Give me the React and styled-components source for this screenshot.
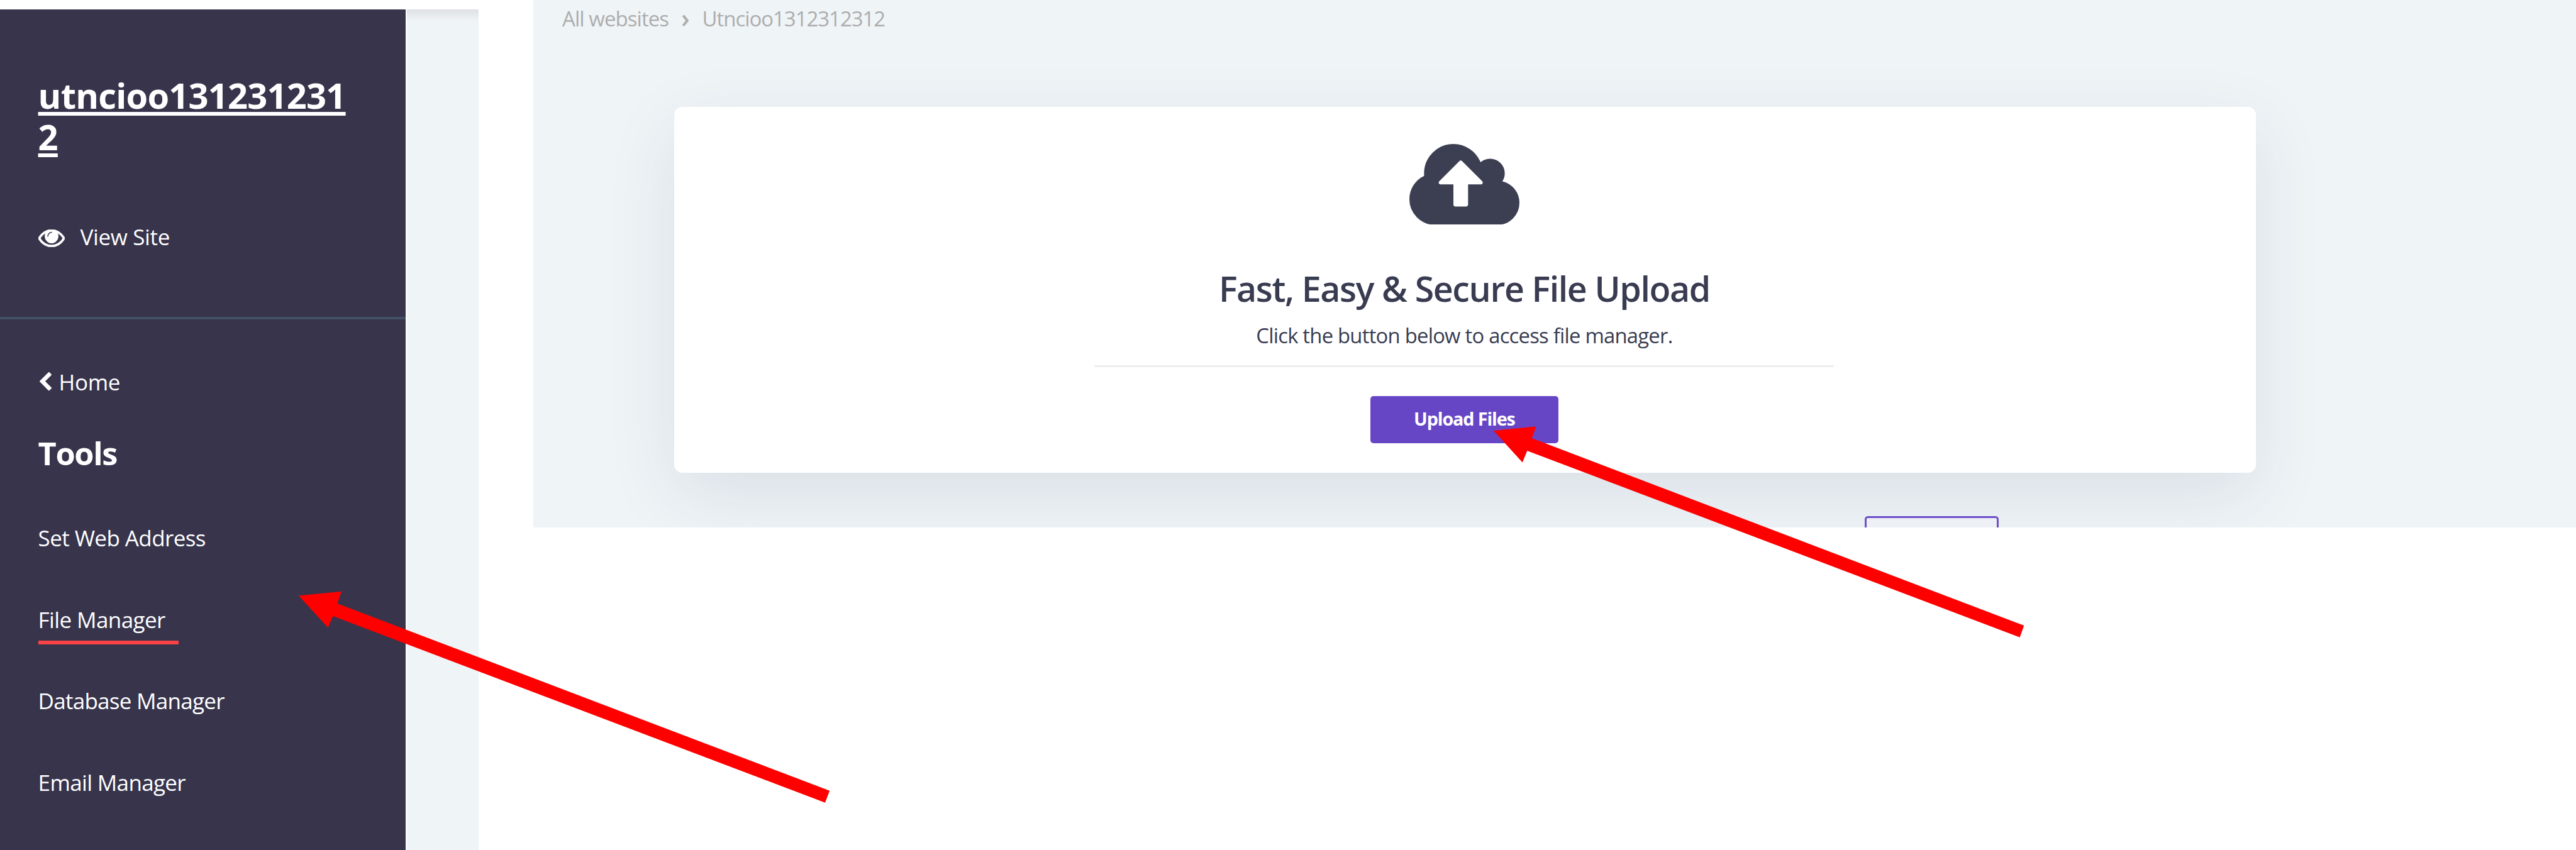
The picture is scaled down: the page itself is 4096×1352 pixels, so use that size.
import React from "react";
import styled, { createGlobalStyle } from "styled-components";

const GlobalStyle = createGlobalStyle`
  * { box-sizing: border-box; }
  html, body { margin: 0; padding: 0; background: #fff; }
  body { font-family: "Open Sans", "Noto Sans", sans-serif; overflow: hidden; }
`;

const Page = styled.div`
  position: relative;
  display: flex;
  align-items: flex-start;
  width: 4096px;
  height: 1352px;
  background: #fff;
  overflow: hidden;
`;

const Sidebar = styled.aside`
  display: flex;
  flex-direction: column;
  flex: none;
  width: 645px;
  height: 1337px;
  margin-top: 15px;
  padding-top: 102.6px;
  background: #37344c;
  color: #fff;
`;

const SiteName = styled.a`
  width: 500px;
  margin-left: 60.6px;
  font-size: 56px;
  font-weight: 700;
  line-height: 66px;
  letter-spacing: -0.77px;
  word-break: break-all;
  text-decoration: underline;
  text-decoration-thickness: 6px;
  text-underline-offset: 4.7px;
  text-decoration-skip-ink: none;
`;

const SideLink = styled.a`
  display: flex;
  align-items: center;
  gap: ${(p) => p.$gap}px;
  height: 48px;
  margin-top: ${(p) => p.$top}px;
  padding-left: ${(p) => p.$left}px;
  font-size: 35px;
  line-height: 48px;
  letter-spacing: -0.35px;
`;

const EyeIcon = styled.svg`
  width: 42px;
  height: 28px;
  margin-top: 4px;
  fill: #fff;
  stroke: #fff;
  stroke-width: 36px;
`;

const BackIcon = styled.svg`
  width: 19px;
  height: 29.5px;
  margin-top: -2px;
  fill: #fff;
`;

const Divider = styled.div`
  flex: none;
  height: 4px;
  margin-top: 102.8px;
  background: #435064;
`;

const SectionTitle = styled.h2`
  margin: 56.2px 0 0 60.6px;
  font-size: 50.5px;
  font-weight: 700;
  line-height: 66px;
  letter-spacing: -1.4px;
`;

const Menu = styled.nav`
  display: flex;
  flex-direction: column;
  align-items: flex-start;
  gap: 66.2px;
  margin: 78.1px 0 0 60.6px;
`;

const MenuItem = styled.a`
  height: 63.2px;
  padding: 0 21px 9.2px 0;
  border-bottom: 6px solid ${(p) => (p.$active ? "#fb4345" : "transparent")};
  font-size: 35px;
  line-height: 48px;
  letter-spacing: ${(p) => p.$tracking}px;
  white-space: nowrap;
`;

const Gutter = styled.div`
  flex: none;
  width: 116px;
  height: 1337px;
  margin-top: 15px;
  border-left: 2px solid #fdfdfe;
  background: linear-gradient(#dce0e4 0, #e4e8eb 7px, #ebeff2 13px, #eff4f7 20px);
`;

const Panel = styled.main`
  flex: 1;
  height: 838.5px;
  margin-left: 87px;
  padding-top: 7.5px;
  background: #eff4f7;
  overflow: hidden;
`;

const Breadcrumb = styled.div`
  display: flex;
  align-items: center;
  height: 44px;
  margin-left: 46px;
  color: #adadad;
  font-size: 33px;
  line-height: 44px;
`;

const Crumb = styled.span`
  letter-spacing: ${(p) => p.$tracking}px;
`;

const CrumbArrow = styled.span`
  width: 53.5px;
  margin-top: -4px;
  font-size: 41px;
  font-weight: 600;
  text-align: center;
`;

const Card = styled.section`
  display: flex;
  flex-direction: column;
  align-items: center;
  width: 2515px;
  height: 582px;
  margin: 118.5px 0 0 224.2px;
  padding: 58.5px 2.6px 0 0;
  border-radius: 13px;
  background: #fff;
  box-shadow: 0 35px 112px rgba(31, 45, 80, 0.1);
  color: #393c51;
`;

const CloudIcon = styled.svg`
  flex: none;
  width: 175px;
  height: 128.7px;
  fill: #3c3f52;
`;

const Heading = styled.h1`
  margin: 66.3px 0 0;
  font-size: 55.5px;
  font-weight: 550;
  line-height: 72px;
  letter-spacing: -1.4px;
  white-space: nowrap;
`;

const Subtitle = styled.p`
  margin: 16.3px 0 0;
  font-size: 32.8px;
  line-height: 44px;
  letter-spacing: -0.76px;
  white-space: nowrap;
`;

const Rule = styled.div`
  width: 1176px;
  height: 3px;
  margin-top: 25.2px;
  background: #eeeeef;
`;

const UploadButton = styled.button`
  width: 299px;
  height: 75px;
  margin-top: 46.3px;
  padding: 0 0 3.6px;
  border: 0;
  border-radius: 5px;
  background: #6746c6;
  color: #fff;
  font-family: inherit;
  font-size: 28.8px;
  font-weight: 700;
  letter-spacing: -1.15px;
`;

const OutlineButton = styled.button`
  display: block;
  width: 213px;
  height: 75px;
  margin: 69.3px 0 0 2117.3px;
  border: 3px solid #6f4fc9;
  border-radius: 5px;
  background: #edf1f5;
`;

const Arrows = styled.svg`
  position: absolute;
  inset: 0;
  width: 4096px;
  height: 1352px;
  fill: #ff0000;
  pointer-events: none;
`;

const MENU = [
  { label: "Set Web Address", tracking: -0.59 },
  { label: "File Manager", tracking: -0.59, active: true },
  { label: "Database Manager", tracking: -0.73 },
  { label: "Email Manager", tracking: -0.65 },
];

export default function App() {
  return (
    <Page>
      <GlobalStyle />
      <Sidebar>
        <SiteName>utncioo1312312312</SiteName>
        <SideLink $top={103.6} $left={60.6} $gap={24.8}>
          <EyeIcon viewBox="0 384 1792 1152" preserveAspectRatio="none">
            <path d="M1664 960q-152-236-381-353 61 104 61 225 0 185-131.5 316.5t-316.5 131.5-316.5-131.5-131.5-316.5q0-121 61-225-229 117-381 353 133 205 333.5 326.5t434.5 121.5 434.5-121.5 333.5-326.5zm-720-384q0-20-14-34t-34-14q-125 0-214.5 89.5t-89.5 214.5q0 20 14 34t34 14 34-14 14-34q0-86 61-147t147-61q20 0 34-14t14-34zm848 384q0 34-20 69-140 230-376.5 368.5t-499.5 138.5-499.5-139-376.5-368q-20-35-20-69t20-69q140-229 376.5-368t499.5-139 499.5 139 376.5 368q20 35 20 69z" />
          </EyeIcon>
          <span>View Site</span>
        </SideLink>
        <Divider />
        <SideLink $top={76.2} $left={63.2} $gap={11.3}>
          <BackIcon viewBox="410 38 1036 1612" preserveAspectRatio="none">
            <path d="M1427 301l-531 531 531 531q19 19 19 45t-19 45l-166 166q-19 19-45 19t-45-19l-742-742q-19-19-19-45t19-45l742-742q19-19 45-19t45 19l166 166q19 19 19 45t-19 45z" />
          </BackIcon>
          <span>Home</span>
        </SideLink>
        <SectionTitle>Tools</SectionTitle>
        <Menu>
          {MENU.map((m) => (
            <MenuItem key={m.label} $active={m.active} $tracking={m.tracking}>
              {m.label}
            </MenuItem>
          ))}
        </Menu>
      </Sidebar>
      <Gutter />
      <Panel>
        <Breadcrumb>
          <Crumb $tracking={-0.95}>All websites</Crumb>
          <CrumbArrow>›</CrumbArrow>
          <Crumb $tracking={-1.06}>Utncioo1312312312</Crumb>
        </Breadcrumb>
        <Card>
          <CloudIcon viewBox="0 128 1920 1408" preserveAspectRatio="none">
            <path d="M1280 800q0-14-9-23l-352-352q-9-9-23-9t-23 9l-351 351q-10 12-10 24 0 14 9 23t23 9h224v352q0 13 9.500 22.500t22.500 9.500h192q13 0 22.500-9.500t9.500-22.500v-352h224q13 0 22.500-9.500t9.500-22.500zm640 352q0 159-112.500 271.500t-271.500 112.500h-1088q-185 0-316.500-131.500t-131.500-316.500q0-130 70-240t188-165q-2-30-2-43 0-212 150-362t362-150q156 0 285.500 87t188.500 231q71-62 166-62 106 0 181 75t75 181q0 76-41 138 130 31 213.500 135.500t83.500 238.500z" />
          </CloudIcon>
          <Heading>Fast, Easy &amp; Secure File Upload</Heading>
          <Subtitle>Click the button below to access file manager.</Subtitle>
          <Rule />
          <UploadButton>Upload Files</UploadButton>
        </Card>
        <OutlineButton />
      </Panel>
      <Arrows viewBox="0 0 4096 1352">
        <polygon points="474.9,947.6 542.9,940.8 536.6,960.1 1319.2,1257.7 1312,1276.7 529.5,980 521.4,998.2" />
        <polygon points="2374.8,684.9 2442.6,678.2 2435.8,697.1 3218.3,995.1 3211.6,1013.8 2428.3,717 2420.8,735.4" />
      </Arrows>
    </Page>
  );
}
